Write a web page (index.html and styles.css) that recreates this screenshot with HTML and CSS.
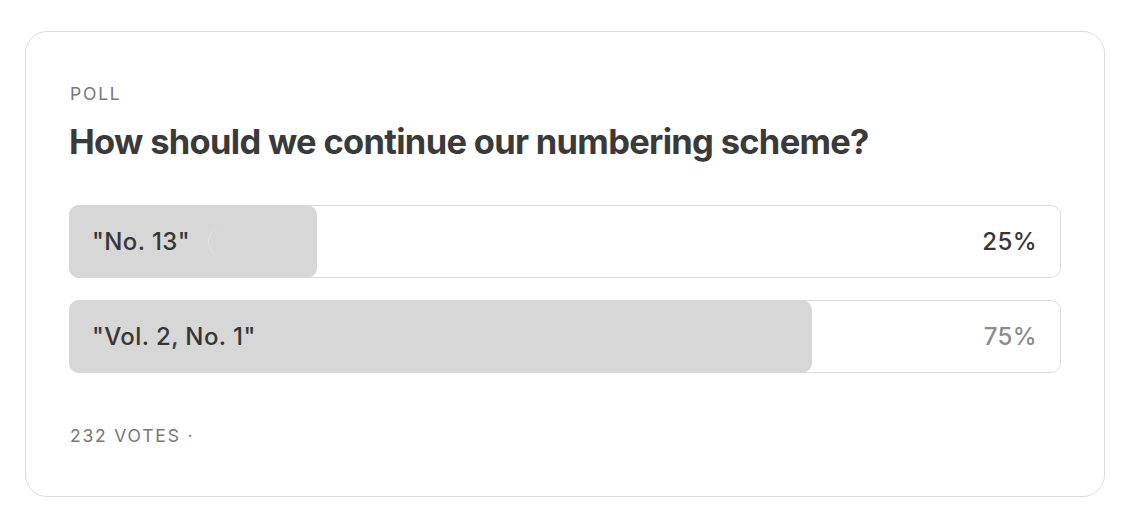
FILE: index.html
```html
<!DOCTYPE html>
<html>
    <head>
        <meta charset="utf-8">
        <title>Poll</title>
        <link rel="stylesheet" href="styles.css">
    </head>
    <body>
        <div class="poll">
            <div class="poll-label">POLL</div>
            <h2 class="poll-title">How should we continue our numbering scheme?</h2>
            <div class="options">
                <div class="option">
                    <div class="fill" style="width: 25%;"></div>
                    <span class="option-text">"No. 13"</span>
                    <span class="spinner"></span>
                    <span class="pct">25%</span>
                </div>
                <div class="option">
                    <div class="fill" style="width: 75%;"></div>
                    <span class="option-text">"Vol. 2, No. 1"</span>
                    <span class="pct pct-muted">75%</span>
                </div>
            </div>
            <div class="poll-footer">232 VOTES ·</div>
        </div>
    </body>
</html>
```

FILE: styles.css
```css
*{
    margin: 0px;
    padding: 0px;
    box-sizing: border-box;
}
body{
    background-color: #fff;
    font-family: Inter, "Noto Sans", "Liberation Sans", sans-serif;
    color: #363636;
}
.poll{
    width: 1080px;
    height: 466px;
    margin: 31px 0px 0px 25px;
    border: 1px solid #dcdcdc;
    border-radius: 22px;
    padding: 50px 43px 0px 43px;
    display: flex;
    flex-direction: column;
}
.poll-label{
    font-size: 17.5px;
    letter-spacing: 1.8px;
    color: #777;
    line-height: 24px;
    padding-left: 1px;
}
.poll-title{
    font-size: 34.5px;
    font-weight: 700;
    letter-spacing: -0.7px;
    color: #3a3a3a;
    line-height: 44px;
    margin-top: 14px;
}
.options{
    display: flex;
    flex-direction: column;
    gap: 22px;
    margin-top: 41px;
}
.option{
    position: relative;
    height: 73px;
    border: 1px solid #dcdcdc;
    border-radius: 10px;
    display: flex;
    align-items: center;
    padding: 0px 23px 0px 22px;
}
.fill{
    position: absolute;
    top: -1px;
    bottom: -1px;
    left: -1px;
    background-color: #d7d7d7;
    border-radius: 10px;
}
.option-text{
    position: relative;
    font-size: 24px;
    font-weight: 500;
    letter-spacing: 0.4px;
}
.spinner{
    position: relative;
    width: 30px;
    height: 30px;
    margin-left: 18px;
    border-radius: 50%;
    border-left: 1px solid #e4e4e4;
}
.pct{
    position: relative;
    margin-left: auto;
    font-size: 24px;
    font-weight: 500;
    letter-spacing: 0.4px;
}
.pct-muted{
    color: #8c8c8c;
}
.poll-footer{
    margin-top: 51px;
    font-size: 17.5px;
    letter-spacing: 1.8px;
    color: #777;
    line-height: 24px;
    padding-left: 1px;
}
```
